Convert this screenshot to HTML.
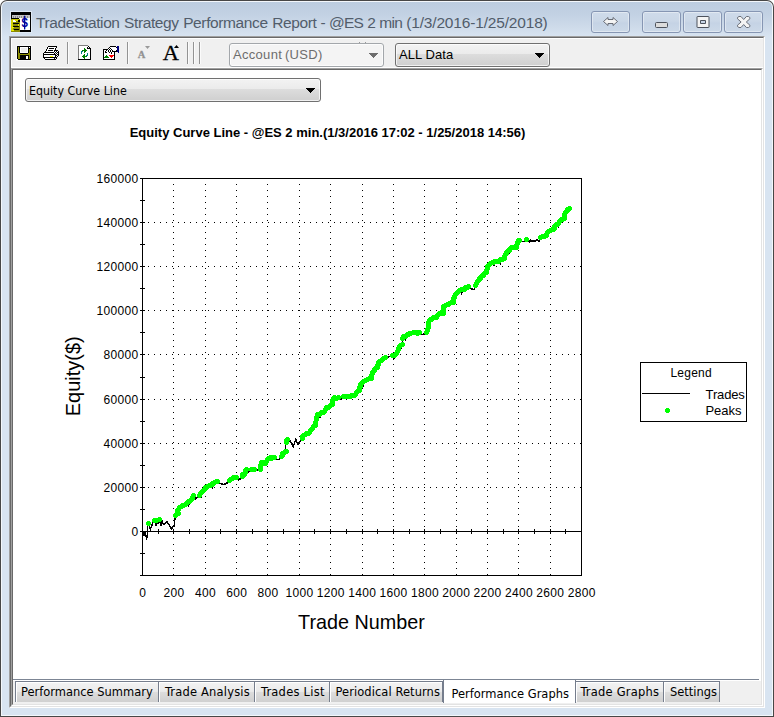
<!DOCTYPE html>
<html><head><meta charset="utf-8"><title>TradeStation Strategy Performance Report</title>
<style>
html,body{margin:0;padding:0;}
body{width:774px;height:717px;overflow:hidden;background:#fff;font-family:"Liberation Sans",sans-serif;position:relative;}
.abs{position:absolute;}
div{box-sizing:border-box;}
#f0{position:absolute;left:0;top:0;width:774px;height:717px;background:#474747;border-radius:7px 7px 0 0;}
#f1{position:absolute;left:1px;top:1px;width:772px;height:715px;background:#f3f7fb;border-radius:6px 6px 0 0;}
#f2{position:absolute;left:2px;top:2px;width:770px;height:713px;border-radius:5px 5px 0 0;background:linear-gradient(#bccde0 0px,#c2d1e3 12px,#cddae9 24px,#d8e4f1 35px,#d8e4f1 100%);}
#title{position:absolute;left:36px;top:12.6px;font-size:15.5px;line-height:20px;letter-spacing:-.38px;word-spacing:.5px;color:#525d6b;white-space:nowrap;}
.cb{position:absolute;top:11px;width:39px;height:22px;border:1px solid #8696b3;border-radius:3px;background:linear-gradient(#cfdbea 0,#cad7e7 45%,#c5d3e5 55%,#ccd9e8 100%);box-shadow:inset 0 0 0 1px rgba(255,255,255,.4);}
#client{position:absolute;left:9px;top:36px;width:756px;height:672px;background:#f0f0f0;border-left:1px solid #a0a0a0;border-top:1px solid #a0a0a0;border-right:1px solid #fff;border-bottom:1px solid #fff;}
#client2{position:absolute;left:10px;top:37px;width:754px;height:670px;background:#f0f0f0;border-left:1px solid #696969;border-top:1px solid #696969;border-right:1px solid #e3e3e3;border-bottom:1px solid #e3e3e3;}
#tbhl{position:absolute;left:11px;top:38px;width:752px;height:30px;border-left:1px solid #fff;border-top:1px solid #fff;border-bottom:1px solid #fff;}
.sep{position:absolute;top:42px;width:2px;height:22px;border-left:1px solid #939393;border-right:1px solid #fbfbfb;}
.combo{position:absolute;border:1px solid #707070;border-radius:3px;background:linear-gradient(#f3f3f3 0,#ebebeb 45%,#dddddd 46%,#cfcfcf 100%);box-shadow:inset 0 0 0 1px rgba(255,255,255,.7);font-size:13px;white-space:nowrap;}
.combo span{position:absolute;left:4px;top:3px;line-height:16px;}
.arrow{position:absolute;width:0;height:0;border-left:4.5px solid transparent;border-right:4.5px solid transparent;border-top:5px solid #000;}
#cont-o{position:absolute;left:11px;top:68px;width:752px;height:638px;background:#fff;border-left:1px solid #a0a0a0;border-top:1px solid #a0a0a0;border-right:1px solid #fff;border-bottom:1px solid #fff;}
#cont-i{position:absolute;left:12px;top:69px;width:750px;height:636px;background:#fff;border-left:1px solid #696969;border-top:1px solid #696969;border-right:1px solid #e3e3e3;border-bottom:1px solid #e3e3e3;}
#tabstrip{position:absolute;left:13px;top:680px;width:748px;height:24px;background:#f0f0f0;border-top:1px solid #fff;}
.tf{font-family:"DejaVu Sans Condensed","Liberation Sans",sans-serif;}
.tab{position:absolute;top:681px;height:21px;border-right:1px solid #757d8c;border-top:1px solid #757d8c;background:linear-gradient(#f3f3f3 0,#ebebeb 47%,#dddddd 50%,#d0d0d0 100%);box-shadow:inset 1px 1px 0 0 #fff;font-size:12.75px;line-height:20px;text-align:left;white-space:nowrap;color:#000;}
.tab span{position:absolute;top:0;}
.tab.first{border-left:1px solid #757d8c;}
.tab.sel{top:680px;height:23px;background:#fff;border:1px solid #757d8c;border-top:none;border-bottom:none;box-shadow:none;}
</style></head><body>
<div id="f0"></div><div id="f1"></div><div id="f2"></div>
<!--APPICON-->
<div id="title">TradeStation Strategy Performance Report<span style="letter-spacing:-.72px"> - @ES 2 min </span><span style="letter-spacing:-.17px">(1/3/2016-1/25/2018)</span></div>
<div class="cb" style="left:591px"></div>
<div class="cb" style="left:642px"></div>
<div class="cb" style="left:683px"></div>
<div class="cb" style="left:724px"></div>
<svg class="abs" style="left:0;top:0" width="774" height="40" viewBox="0 0 774 40">
<g fill="#f4f4f4" stroke="#4d525c" stroke-width="1" stroke-linejoin="round">
<path d="M603.5 21.5 L608 17.5 V19.5 H613 V17.5 L617.5 21.5 L613 25.5 V23.5 H608 V25.5 Z" stroke="#5a5f69" stroke-width=".9"/>
<rect x="655.5" y="22.5" width="12" height="5" rx="1" fill="#dcdcdc"/>
<path fill-rule="evenodd" d="M697.5 16.500h11a.5 .5 0 0 1 .5 .5v10a.5 .5 0 0 1 -.5 .5h-11a.5 .5 0 0 1 -.5 -.5v-10a.5 .5 0 0 1 .5 -.5z M700.5 20.500v3h5v-3z"/>
<path d="M737.500 17.500 l1.500 -1 h2 l2.700 3 l2.700 -3 h2 l1.500 1 v1.300 l-3.600 3.200 l3.600 3.200 v1.300 l-1.500 1 h-2 l-2.700 -3 l-2.700 3 h-2 l-1.500 -1 v-1.300 l3.600 -3.200 l-3.600 -3.200 z" stroke="#6a6f79"/>
</g>
</svg>

<div id="client"></div><div id="client2"></div><div id="tbhl"></div>
<div class="sep" style="left:67px"></div>
<div class="sep" style="left:127px"></div>
<div class="sep" style="left:187px"></div><div class="sep" style="left:193px"></div><div class="sep" style="left:199px"></div>
<svg class="abs" style="left:0;top:0" width="774" height="72" viewBox="0 0 774 72">
<!-- app icon -->
<rect x="10" y="11" width="22" height="22" fill="#e4edf7" opacity=".8"/>
<g shape-rendering="crispEdges">
<rect x="11" y="12" width="20" height="20" fill="#000"/>
<rect x="12" y="15" width="18" height="3" fill="#c4c4c4"/>
<path d="M13 16v2M15 16v2M17 16v2M19 16v2M21 16v2M23 16v2M25 16v2M27 16v2" stroke="#8c8c8c" stroke-width="1" transform="translate(.5,0)"/>
<rect x="19" y="18" width="11" height="12" fill="#fff"/>
<rect x="11" y="19" width="9" height="13" rx="1" fill="#8c8c00"/>
<rect x="11" y="20" width="2" height="11" fill="#d4d400"/>
<rect x="12" y="19" width="7" height="1" fill="#c8c800"/>
<rect x="13" y="20" width="3" height="2" fill="#fff"/>
<rect x="15" y="20" width="3" height="1" fill="#e6e600"/>
<rect x="18" y="20" width="2" height="2" fill="#000"/>
<rect x="13" y="23" width="6" height="1" fill="#000"/>
<rect x="13" y="26" width="6" height="1" fill="#000"/>
<rect x="14" y="29" width="5" height="1" fill="#000"/>
<rect x="12" y="27" width="2" height="1" fill="#f0f000"/>
<rect x="12" y="30" width="2" height="1" fill="#f0f000"/>
<rect x="18" y="24" width="1" height="2" fill="#e6e600"/>
</g>
<text transform="translate(24.6,27.3) scale(.85,1)" font-family="'Liberation Sans',sans-serif" font-weight="bold" font-size="13.5px" text-anchor="middle" fill="#00009c">$</text>
<path d="M24.6 15.8v13.6" stroke="#00009c" stroke-width="1.2"/>
<!-- save -->
<rect x="16" y="45" width="16" height="16" fill="#fff" opacity=".55"/>
<g shape-rendering="crispEdges">
<rect x="17" y="46" width="14" height="14" fill="#000"/>
<rect x="18" y="47" width="1" height="12" fill="#8c8c00"/>
<rect x="19" y="53" width="1" height="6" fill="#8c8c00"/>
<rect x="29" y="49" width="1" height="10" fill="#8c8c00"/>
<rect x="28" y="53" width="1" height="2" fill="#8c8c00"/>
<rect x="18" y="54" width="12" height="1" fill="#8c8c00"/>
<rect x="20" y="47" width="8" height="6" fill="#fff"/>
<rect x="21" y="48" width="6" height="4" fill="#ececec"/>
<rect x="20" y="55" width="8" height="4" fill="#000"/>
<rect x="26" y="56" width="2" height="3" fill="#fff"/>
<rect x="29" y="47" width="1" height="1" fill="#fff"/>
<rect x="17" y="59" width="1" height="1" fill="#fff"/>
</g>
<!-- printer -->
<g shape-rendering="crispEdges">
<path fill="#000" d="M48 46h9v1h-9zM47 47h1v1h-1zM56 47h1v1h-1zM47 48h1v1h-1zM49 48h5v1h-5zM55 48h1v1h-1zM46 49h1v1h-1zM55 49h1v1h-1zM46 50h1v1h-1zM48 50h5v1h-5zM54 50h4v1h-4zM45 51h1v1h-1zM54 51h1v1h-1zM56 51h1v1h-1zM58 51h1v1h-1zM44 52h10v1h-10zM55 52h1v1h-1zM57 52h2v1h-2zM43 53h1v1h-1zM54 53h1v1h-1zM56 53h1v1h-1zM58 53h1v1h-1zM43 54h13v1h-13zM57 54h2v1h-2zM43 55h1v1h-1zM55 55h2v1h-2zM58 55h1v1h-1zM43 56h1v1h-1zM55 56h1v1h-1zM57 56h1v1h-1zM43 57h14v1h-14zM44 58h1v1h-1zM54 58h1v1h-1zM56 58h1v1h-1zM45 59h11v1h-11z"/><path fill="#fff" d="M48 47h8v1h-8zM48 48h1v1h-1zM54 48h1v1h-1zM47 49h8v1h-8zM47 50h1v1h-1zM53 50h1v1h-1zM46 51h8v1h-8zM55 51h1v1h-1zM57 51h1v1h-1zM54 52h1v1h-1zM56 52h1v1h-1zM44 53h10v1h-10zM55 53h1v1h-1zM57 53h1v1h-1zM56 54h1v1h-1zM44 55h11v1h-11zM57 55h1v1h-1zM44 56h6v1h-6zM53 56h2v1h-2zM56 56h1v1h-1zM45 58h9v1h-9zM55 58h1v1h-1z"/><path fill="#ffff00" d="M50 56h3v1h-3z"/>
<!-- refresh -->
<path fill="#808080" d="M78 45h10v1h-10zM78 46h1v1h-1zM78 47h1v1h-1zM78 48h1v1h-1zM78 49h1v1h-1zM78 50h1v1h-1zM78 51h1v1h-1zM78 52h1v1h-1zM78 53h1v1h-1zM78 54h1v1h-1zM78 55h1v1h-1zM78 56h1v1h-1zM78 57h1v1h-1zM78 58h1v1h-1z"/><path fill="#fff" d="M79 46h9v1h-9zM79 47h8v1h-8zM88 47h1v1h-1zM79 48h5v1h-5zM85 48h2v1h-2zM79 49h5v1h-5zM86 49h4v1h-4zM79 50h3v1h-3zM87 50h3v1h-3zM79 51h2v1h-2zM83 51h1v1h-1zM86 51h4v1h-4zM79 52h2v1h-2zM82 52h2v1h-2zM85 52h5v1h-5zM79 53h2v1h-2zM82 53h5v1h-5zM88 53h2v1h-2zM79 54h5v1h-5zM85 54h2v1h-2zM88 54h2v1h-2zM79 55h4v1h-4zM85 55h1v1h-1zM88 55h2v1h-2zM79 56h3v1h-3zM87 56h3v1h-3zM79 57h4v1h-4zM85 57h5v1h-5zM79 58h5v1h-5zM85 58h5v1h-5z"/><path fill="#000" d="M88 46h1v1h-1zM87 47h1v1h-1zM89 47h1v1h-1zM87 48h4v1h-4zM90 49h1v1h-1zM90 50h1v1h-1zM90 51h1v1h-1zM90 52h1v1h-1zM90 53h1v1h-1zM90 54h1v1h-1zM90 55h1v1h-1zM90 56h1v1h-1zM90 57h1v1h-1zM90 58h1v1h-1zM78 59h13v1h-13z"/><path fill="#008000" d="M84 48h1v1h-1zM84 49h2v1h-2zM82 50h5v1h-5zM84 51h2v1h-2zM84 52h1v1h-1zM84 54h1v1h-1zM83 55h2v1h-2zM82 56h5v1h-5zM83 57h2v1h-2zM84 58h1v1h-1z"/><path fill="#008080" d="M81 51h2v1h-2zM81 52h1v1h-1zM81 53h1v1h-1zM87 53h1v1h-1zM87 54h1v1h-1zM86 55h2v1h-2z"/>
<!-- settings -->
<path fill="#000" d="M110 46h6v1h-6zM109 47h1v1h-1zM116 47h1v1h-1zM108 48h1v1h-1zM110 48h1v1h-1zM103 49h5v1h-5zM109 49h1v1h-1zM111 49h1v1h-1zM103 50h1v1h-1zM106 50h1v1h-1zM108 50h1v1h-1zM110 50h1v1h-1zM112 50h1v1h-1zM116 50h1v1h-1zM103 51h1v1h-1zM105 51h1v1h-1zM108 51h1v1h-1zM110 51h1v1h-1zM112 51h5v1h-5zM103 52h1v1h-1zM105 52h2v1h-2zM109 52h1v1h-1zM111 52h1v1h-1zM114 52h1v1h-1zM103 53h1v1h-1zM111 53h1v1h-1zM114 53h1v1h-1zM103 54h1v1h-1zM114 54h1v1h-1zM103 55h1v1h-1zM114 55h1v1h-1zM103 56h1v1h-1zM114 56h1v1h-1zM103 57h1v1h-1zM114 57h1v1h-1zM103 58h1v1h-1zM114 58h1v1h-1zM103 59h12v1h-12z"/><path fill="#000080" d="M117 46h2v1h-2zM117 47h2v1h-2zM117 48h2v1h-2zM117 49h2v1h-2zM117 50h2v1h-2zM117 51h2v1h-2zM118 52h1v1h-1z"/><path fill="#fff" d="M110 47h6v1h-6zM109 48h1v1h-1zM111 48h6v1h-6zM108 49h1v1h-1zM110 49h1v1h-1zM112 49h5v1h-5zM104 50h2v1h-2zM107 50h1v1h-1zM109 50h1v1h-1zM111 50h1v1h-1zM113 50h3v1h-3zM104 51h1v1h-1zM106 51h2v1h-2zM109 51h1v1h-1zM111 51h1v1h-1zM104 52h1v1h-1zM107 52h2v1h-2zM110 52h1v1h-1zM112 52h2v1h-2zM104 53h7v1h-7zM112 53h2v1h-2zM104 54h10v1h-10zM104 55h2v1h-2zM107 55h2v1h-2zM104 56h1v1h-1zM108 56h2v1h-2zM113 56h1v1h-1zM109 57h2v1h-2zM112 57h2v1h-2zM104 58h10v1h-10z"/><path fill="#008000" d="M106 55h1v1h-1zM105 56h3v1h-3zM104 57h5v1h-5z"/><path fill="#ff0000" d="M109 55h5v1h-5zM110 56h3v1h-3zM111 57h1v1h-1z"/>
</g>
<!-- small A -->
<text x="141.6" y="58" font-family="'Liberation Serif',serif" font-weight="bold" font-size="10.5px" text-anchor="middle" fill="#929292" stroke="#929292" stroke-width=".3">A</text>
<path d="M145 46h5l-2.500 3z" fill="#9a9a9a"/>
<!-- big A -->
<text transform="translate(170.9,60) scale(1.09,1)" font-family="'Liberation Serif',serif" font-size="20.5px" text-anchor="middle" fill="#000" stroke="#000" stroke-width=".3">A</text>
<path d="M174 48h5l-2.500 -3z" fill="#000"/>
</svg>

<div class="combo" style="left:229px;top:43px;width:155px;height:24px;color:#6d6d6d;border-color:#a3a7ab;background:#f4f4f4;box-shadow:inset 0 0 0 1px #fcfcfc"><span style="left:3px;top:3.4px;letter-spacing:.3px;word-spacing:-1px">Account (USD)</span><svg class="abs" style="left:139px;top:9px" width="9" height="5" viewBox="0 0 9 5" shape-rendering="crispEdges"><path fill="#6d6d6d" d="M0 0h9v1h-1v1h-1v1h-1v1h-1v1h-1v-1h-1v-1h-1v-1h-1v-1h-1z"/></svg></div>
<div class="combo" style="left:395px;top:43px;width:155px;height:24px;"><span style="left:3px;top:3.4px;letter-spacing:.08px">ALL Data</span><svg class="abs" style="left:139px;top:9px" width="9" height="5" viewBox="0 0 9 5" shape-rendering="crispEdges"><path fill="#000" d="M0 0h9v1h-1v1h-1v1h-1v1h-1v1h-1v-1h-1v-1h-1v-1h-1v-1h-1z"/></svg></div>
<div id="cont-o"></div><div id="cont-i"></div>
<div class="combo" style="left:25px;top:78px;width:296px;height:24px;"><span class="tf" style="font-size:12.3px;left:3px;top:4px">Equity Curve Line</span><svg class="abs" style="left:280px;top:9px" width="9" height="5" viewBox="0 0 9 5" shape-rendering="crispEdges"><path fill="#000" d="M0 0h9v1h-1v1h-1v1h-1v1h-1v1h-1v-1h-1v-1h-1v-1h-1v-1h-1z"/></svg></div>
<svg class="abs" style="left:0;top:0" width="774" height="717" viewBox="0 0 774 717" font-family="'Liberation Sans',sans-serif">
<g stroke="#000" stroke-width="1" stroke-dasharray="1 5" shape-rendering="crispEdges">
<line x1="173.5" y1="184" x2="173.5" y2="575"/>
<line x1="205.5" y1="184" x2="205.5" y2="575"/>
<line x1="236.5" y1="184" x2="236.5" y2="575"/>
<line x1="267.5" y1="184" x2="267.5" y2="575"/>
<line x1="299.5" y1="184" x2="299.5" y2="575"/>
<line x1="330.5" y1="184" x2="330.5" y2="575"/>
<line x1="362.5" y1="184" x2="362.5" y2="575"/>
<line x1="393.5" y1="184" x2="393.5" y2="575"/>
<line x1="424.5" y1="184" x2="424.5" y2="575"/>
<line x1="456.5" y1="184" x2="456.5" y2="575"/>
<line x1="487.5" y1="184" x2="487.5" y2="575"/>
<line x1="518.5" y1="184" x2="518.5" y2="575"/>
<line x1="550.5" y1="184" x2="550.5" y2="575"/>
<line x1="148" y1="222.5" x2="581" y2="222.5"/>
<line x1="148" y1="266.5" x2="581" y2="266.5"/>
<line x1="148" y1="310.5" x2="581" y2="310.5"/>
<line x1="148" y1="354.5" x2="581" y2="354.5"/>
<line x1="148" y1="399.5" x2="581" y2="399.5"/>
<line x1="148" y1="443.5" x2="581" y2="443.5"/>
<line x1="148" y1="487.5" x2="581" y2="487.5"/>
</g>
<g stroke="#000" stroke-width="1" shape-rendering="crispEdges" fill="none">
<rect x="142.5" y="178.5" width="439.0" height="397.0"/>
<line x1="142.5" y1="531.5" x2="581.5" y2="531.5"/>
<line x1="140" y1="178.5" x2="145" y2="178.5"/>
<line x1="140" y1="200.5" x2="145" y2="200.5"/>
<line x1="140" y1="222.5" x2="145" y2="222.5"/>
<line x1="140" y1="244.5" x2="145" y2="244.5"/>
<line x1="140" y1="266.5" x2="145" y2="266.5"/>
<line x1="140" y1="288.5" x2="145" y2="288.5"/>
<line x1="140" y1="310.5" x2="145" y2="310.5"/>
<line x1="140" y1="332.5" x2="145" y2="332.5"/>
<line x1="140" y1="354.5" x2="145" y2="354.5"/>
<line x1="140" y1="377.5" x2="145" y2="377.5"/>
<line x1="140" y1="399.5" x2="145" y2="399.5"/>
<line x1="140" y1="421.5" x2="145" y2="421.5"/>
<line x1="140" y1="443.5" x2="145" y2="443.5"/>
<line x1="140" y1="465.5" x2="145" y2="465.5"/>
<line x1="140" y1="487.5" x2="145" y2="487.5"/>
<line x1="140" y1="509.5" x2="145" y2="509.5"/>
<line x1="140" y1="531.5" x2="145" y2="531.5"/>
<line x1="140" y1="553.5" x2="145" y2="553.5"/>
<line x1="140" y1="575.5" x2="145" y2="575.5"/>
<line x1="158.5" y1="529" x2="158.5" y2="534"/>
<line x1="173.5" y1="529" x2="173.5" y2="534"/>
<line x1="189.5" y1="529" x2="189.5" y2="534"/>
<line x1="205.5" y1="529" x2="205.5" y2="534"/>
<line x1="220.5" y1="529" x2="220.5" y2="534"/>
<line x1="236.5" y1="529" x2="236.5" y2="534"/>
<line x1="252.5" y1="529" x2="252.5" y2="534"/>
<line x1="267.5" y1="529" x2="267.5" y2="534"/>
<line x1="283.5" y1="529" x2="283.5" y2="534"/>
<line x1="299.5" y1="529" x2="299.5" y2="534"/>
<line x1="314.5" y1="529" x2="314.5" y2="534"/>
<line x1="330.5" y1="529" x2="330.5" y2="534"/>
<line x1="346.5" y1="529" x2="346.5" y2="534"/>
<line x1="362.5" y1="529" x2="362.5" y2="534"/>
<line x1="377.5" y1="529" x2="377.5" y2="534"/>
<line x1="393.5" y1="529" x2="393.5" y2="534"/>
<line x1="409.5" y1="529" x2="409.5" y2="534"/>
<line x1="424.5" y1="529" x2="424.5" y2="534"/>
<line x1="440.5" y1="529" x2="440.5" y2="534"/>
<line x1="456.5" y1="529" x2="456.5" y2="534"/>
<line x1="471.5" y1="529" x2="471.5" y2="534"/>
<line x1="487.5" y1="529" x2="487.5" y2="534"/>
<line x1="503.5" y1="529" x2="503.5" y2="534"/>
<line x1="518.5" y1="529" x2="518.5" y2="534"/>
<line x1="534.5" y1="529" x2="534.5" y2="534"/>
<line x1="550.5" y1="529" x2="550.5" y2="534"/>
<line x1="565.5" y1="529" x2="565.5" y2="534"/>
</g>
<g font-size="12px" fill="#000" letter-spacing=".33">
<text x="138.6" y="183.0" text-anchor="end">160000</text>
<text x="138.6" y="227.0" text-anchor="end">140000</text>
<text x="138.6" y="271.0" text-anchor="end">120000</text>
<text x="138.6" y="315.0" text-anchor="end">100000</text>
<text x="138.6" y="359.0" text-anchor="end">80000</text>
<text x="138.6" y="404.0" text-anchor="end">60000</text>
<text x="138.6" y="448.0" text-anchor="end">40000</text>
<text x="138.6" y="492.0" text-anchor="end">20000</text>
<text x="138.6" y="536.0" text-anchor="end">0</text>
<text x="142.7" y="597" text-anchor="middle">0</text>
<text x="174.1" y="597" text-anchor="middle">200</text>
<text x="205.4" y="597" text-anchor="middle">400</text>
<text x="236.8" y="597" text-anchor="middle">600</text>
<text x="268.1" y="597" text-anchor="middle">800</text>
<text x="299.5" y="597" text-anchor="middle">1000</text>
<text x="330.8" y="597" text-anchor="middle">1200</text>
<text x="362.2" y="597" text-anchor="middle">1400</text>
<text x="393.6" y="597" text-anchor="middle">1600</text>
<text x="424.9" y="597" text-anchor="middle">1800</text>
<text x="456.3" y="597" text-anchor="middle">2000</text>
<text x="487.6" y="597" text-anchor="middle">2200</text>
<text x="519.0" y="597" text-anchor="middle">2400</text>
<text x="550.3" y="597" text-anchor="middle">2600</text>
<text x="581.7" y="597" text-anchor="middle">2800</text>
</g>
<text x="327.5" y="137" font-size="13px" font-weight="bold" text-anchor="middle" fill="#000">Equity Curve Line - @ES 2 min.(1/3/2016 17:02 - 1/25/2018 14:56)</text>
<text x="361.5" y="628.5" font-size="19.8px" text-anchor="middle" fill="#000">Trade Number</text>
<text transform="translate(80,376.3) rotate(-90)" font-size="20px" text-anchor="middle" fill="#000">Equity($)</text>
<polyline points="143.5,531.5 145.5,534.5 146.5,538.2 147.3,536.0 147.3,526.3 148.6,523.6 149.5,526.8 150.3,529.3 151.4,526.3 152.8,523.0 154.4,520.6 155.5,524.1 156.3,526.3 156.8,520.3 157.9,523.0 158.5,521.0 159.5,519.3 160.9,525.5 162.2,519.8 162.5,522.5 163.9,524.1 165.5,522.8 167.4,521.7 167.7,523.6 169.3,525.2 171.7,529.0 172.6,526.3 174.4,526.0 174.6,520.3 175.0,518.7 175.7,515.7 178.0,513.0 177.4,511.8 178.0,514.1 178.8,512.0 178.0,509.0 178.9,508.8 179.5,511.1 180.3,509.0 181.0,506.7 186.5,503.6 188.2,502.6 188.8,504.9 189.6,502.8 191.0,499.7 191.6,498.8 192.2,501.1 193.0,499.0 193.5,495.8 195.8,499.0 198.0,497.0 199.7,495.0 200.6,494.3 201.2,496.6 202.0,494.5 203.6,490.4 206.7,487.3 210.5,485.0 212.2,484.7 212.8,487.0 213.6,484.9 216.0,481.9 217.5,481.5 219.8,483.4 223.7,484.5 226.8,483.4 229.0,480.3 234.6,477.7 236.0,477.2 238.4,480.0 241.0,478.5 242.3,476.4 245.4,472.6 246.6,469.8 248.7,472.0 251.0,469.5 254.5,469.5 256.8,470.6 260.0,469.0 261.7,462.0 265.6,463.0 266.9,461.1 267.5,463.4 268.3,461.3 268.7,458.3 274.9,457.2 277.2,459.8 279.5,459.3 281.9,456.7 282.6,453.6 283.5,453.7 284.1,456.0 284.9,453.9 286.5,451.3 285.4,448.0 285.4,444.0 286.5,442.8 287.0,439.7 290.4,441.2 293.2,446.4 295.8,439.7 298.0,444.3 300.5,441.2 302.5,438.1 303.6,435.0 309.0,432.0 310.4,430.9 311.0,433.2 311.8,431.1 312.9,428.0 315.5,425.0 316.0,418.8 317.5,414.9 319.5,414.5 320.1,416.8 320.9,414.7 324.5,411.0 325.2,410.3 325.8,412.6 326.6,410.5 326.8,407.9 332.2,404.8 333.0,398.6 338.4,397.4 340.8,399.4 343.9,396.8 348.5,396.8 354.0,395.4 359.4,390.8 360.2,384.6 362.4,383.6 363.0,385.9 363.8,383.8 365.6,380.7 371.0,378.4 372.6,372.2 377.2,367.5 378.8,362.1 385.0,357.4 388.0,357.2 392.0,355.9 393.2,356.1 393.8,358.4 394.6,356.3 395.8,354.3 398.9,348.1 399.8,347.2 400.4,349.5 401.2,347.4 402.0,344.3 402.4,341.0 402.8,338.0 405.2,336.9 405.8,339.2 406.6,337.1 408.2,334.2 414.4,332.6 419.0,332.6 423.0,334.6 426.0,332.6 428.4,327.2 430.0,319.5 436.0,317.1 438.4,314.5 443.0,313.3 443.9,306.3 448.5,304.0 453.4,302.5 454.0,296.2 458.4,291.0 461.1,290.9 461.7,293.2 462.5,291.1 464.2,289.0 468.7,286.2 471.0,288.8 473.9,289.5 475.9,285.3 478.8,280.4 482.6,275.6 486.5,272.7 487.5,266.9 490.4,263.0 493.5,263.0 494.1,265.3 494.9,263.2 498.0,261.0 499.7,260.8 500.3,263.1 501.1,261.0 504.0,258.0 505.1,255.7 505.7,258.0 506.5,255.9 506.9,252.3 508.3,251.3 508.9,253.6 509.7,251.5 511.7,247.5 516.6,247.5 517.5,242.6 517.9,242.3 518.5,244.6 519.3,242.5 519.5,240.0 523.3,241.7 526.2,239.3 528.5,240.8 529.5,241.8 530.5,240.4 531.5,241.5 533.0,240.6 534.5,241.2 536.9,240.0 538.0,240.4 539.2,241.3 540.8,237.8 546.6,235.9 548.5,231.0 553.4,229.0 557.2,224.2 557.9,223.3 558.5,225.6 559.3,223.5 560.0,220.3 564.0,218.4 565.0,212.6 569.5,208.7" fill="none" stroke="#000" stroke-width="1.5" shape-rendering="crispEdges"/>
<rect x="143" y="532" width="3" height="4" fill="#000"/>
<path d="M147 521h3v1h1v3h-1v1h-3v-1h-1v-3h1zM153 518h3v1h1v3h-1v1h-3v-1h-1v-3h1zM155 518h3v1h1v3h-1v1h-3v-1h-1v-3h1zM158 517h3v1h1v3h-1v1h-3v-1h-1v-3h1zM174 513h3v1h1v3h-1v1h-3v-1h-1v-3h1zM175 512h3v1h1v3h-1v1h-3v-1h-1v-3h1zM177 511h3v1h1v3h-1v1h-3v-1h-1v-3h1zM176 508h3v1h1v3h-1v1h-3v-1h-1v-3h1zM177 507h3v1h1v3h-1v1h-3v-1h-1v-3h1zM178 505h3v1h1v3h-1v1h-3v-1h-1v-3h1zM180 504h3v1h1v3h-1v1h-3v-1h-1v-3h1zM181 503h3v1h1v3h-1v1h-3v-1h-1v-3h1zM182 503h3v1h1v3h-1v1h-3v-1h-1v-3h1zM184 502h3v1h1v3h-1v1h-3v-1h-1v-3h1zM185 501h3v1h1v3h-1v1h-3v-1h-1v-3h1zM186 500h3v1h1v3h-1v1h-3v-1h-1v-3h1zM187 499h3v1h1v3h-1v1h-3v-1h-1v-3h1zM188 499h3v1h1v3h-1v1h-3v-1h-1v-3h1zM190 497h3v1h1v3h-1v1h-3v-1h-1v-3h1zM191 496h3v1h1v3h-1v1h-3v-1h-1v-3h1zM191 495h3v1h1v3h-1v1h-3v-1h-1v-3h1zM192 493h3v1h1v3h-1v1h-3v-1h-1v-3h1zM198 493h3v1h1v3h-1v1h-3v-1h-1v-3h1zM199 491h3v1h1v3h-1v1h-3v-1h-1v-3h1zM200 490h3v1h1v3h-1v1h-3v-1h-1v-3h1zM201 489h3v1h1v3h-1v1h-3v-1h-1v-3h1zM202 488h3v1h1v3h-1v1h-3v-1h-1v-3h1zM203 487h3v1h1v3h-1v1h-3v-1h-1v-3h1zM204 485h3v1h1v3h-1v1h-3v-1h-1v-3h1zM205 485h3v1h1v3h-1v1h-3v-1h-1v-3h1zM206 484h3v1h1v3h-1v1h-3v-1h-1v-3h1zM208 483h3v1h1v3h-1v1h-3v-1h-1v-3h1zM209 483h3v1h1v3h-1v1h-3v-1h-1v-3h1zM211 482h3v1h1v3h-1v1h-3v-1h-1v-3h1zM211 481h3v1h1v3h-1v1h-3v-1h-1v-3h1zM213 480h3v1h1v3h-1v1h-3v-1h-1v-3h1zM215 479h3v1h1v3h-1v1h-3v-1h-1v-3h1zM216 479h3v1h1v3h-1v1h-3v-1h-1v-3h1zM228 478h3v1h1v3h-1v1h-3v-1h-1v-3h1zM229 477h3v1h1v3h-1v1h-3v-1h-1v-3h1zM231 476h3v1h1v3h-1v1h-3v-1h-1v-3h1zM232 475h3v1h1v3h-1v1h-3v-1h-1v-3h1zM233 475h3v1h1v3h-1v1h-3v-1h-1v-3h1zM235 475h3v1h1v3h-1v1h-3v-1h-1v-3h1zM241 474h3v1h1v3h-1v1h-3v-1h-1v-3h1zM241 472h3v1h1v3h-1v1h-3v-1h-1v-3h1zM243 472h3v1h1v3h-1v1h-3v-1h-1v-3h1zM244 470h3v1h1v3h-1v1h-3v-1h-1v-3h1zM244 468h3v1h1v3h-1v1h-3v-1h-1v-3h1zM245 467h3v1h1v3h-1v1h-3v-1h-1v-3h1zM250 467h3v1h1v3h-1v1h-3v-1h-1v-3h1zM252 467h3v1h1v3h-1v1h-3v-1h-1v-3h1zM253 467h3v1h1v3h-1v1h-3v-1h-1v-3h1zM259 467h3v1h1v3h-1v1h-3v-1h-1v-3h1zM259 465h3v1h1v3h-1v1h-3v-1h-1v-3h1zM259 463h3v1h1v3h-1v1h-3v-1h-1v-3h1zM260 462h3v1h1v3h-1v1h-3v-1h-1v-3h1zM260 460h3v1h1v3h-1v1h-3v-1h-1v-3h1zM262 460h3v1h1v3h-1v1h-3v-1h-1v-3h1zM264 461h3v1h1v3h-1v1h-3v-1h-1v-3h1zM265 459h3v1h1v3h-1v1h-3v-1h-1v-3h1zM266 457h3v1h1v3h-1v1h-3v-1h-1v-3h1zM267 456h3v1h1v3h-1v1h-3v-1h-1v-3h1zM269 455h3v1h1v3h-1v1h-3v-1h-1v-3h1zM270 456h3v1h1v3h-1v1h-3v-1h-1v-3h1zM272 455h3v1h1v3h-1v1h-3v-1h-1v-3h1zM273 455h3v1h1v3h-1v1h-3v-1h-1v-3h1zM280 454h3v1h1v3h-1v1h-3v-1h-1v-3h1zM281 453h3v1h1v3h-1v1h-3v-1h-1v-3h1zM281 451h3v1h1v3h-1v1h-3v-1h-1v-3h1zM283 450h3v1h1v3h-1v1h-3v-1h-1v-3h1zM284 449h3v1h1v3h-1v1h-3v-1h-1v-3h1zM285 449h3v1h1v3h-1v1h-3v-1h-1v-3h1zM285 440h3v1h1v3h-1v1h-3v-1h-1v-3h1zM285 438h3v1h1v3h-1v1h-3v-1h-1v-3h1zM286 437h3v1h1v3h-1v1h-3v-1h-1v-3h1zM301 436h3v1h1v3h-1v1h-3v-1h-1v-3h1zM301 434h3v1h1v3h-1v1h-3v-1h-1v-3h1zM302 433h3v1h1v3h-1v1h-3v-1h-1v-3h1zM304 432h3v1h1v3h-1v1h-3v-1h-1v-3h1zM305 431h3v1h1v3h-1v1h-3v-1h-1v-3h1zM307 431h3v1h1v3h-1v1h-3v-1h-1v-3h1zM308 430h3v1h1v3h-1v1h-3v-1h-1v-3h1zM309 428h3v1h1v3h-1v1h-3v-1h-1v-3h1zM310 427h3v1h1v3h-1v1h-3v-1h-1v-3h1zM311 426h3v1h1v3h-1v1h-3v-1h-1v-3h1zM312 424h3v1h1v3h-1v1h-3v-1h-1v-3h1zM314 423h3v1h1v3h-1v1h-3v-1h-1v-3h1zM314 421h3v1h1v3h-1v1h-3v-1h-1v-3h1zM314 420h3v1h1v3h-1v1h-3v-1h-1v-3h1zM315 417h3v1h1v3h-1v1h-3v-1h-1v-3h1zM315 416h3v1h1v3h-1v1h-3v-1h-1v-3h1zM315 415h3v1h1v3h-1v1h-3v-1h-1v-3h1zM316 412h3v1h1v3h-1v1h-3v-1h-1v-3h1zM318 412h3v1h1v3h-1v1h-3v-1h-1v-3h1zM319 411h3v1h1v3h-1v1h-3v-1h-1v-3h1zM320 410h3v1h1v3h-1v1h-3v-1h-1v-3h1zM322 410h3v1h1v3h-1v1h-3v-1h-1v-3h1zM323 409h3v1h1v3h-1v1h-3v-1h-1v-3h1zM324 407h3v1h1v3h-1v1h-3v-1h-1v-3h1zM325 405h3v1h1v3h-1v1h-3v-1h-1v-3h1zM327 405h3v1h1v3h-1v1h-3v-1h-1v-3h1zM328 404h3v1h1v3h-1v1h-3v-1h-1v-3h1zM329 403h3v1h1v3h-1v1h-3v-1h-1v-3h1zM331 402h3v1h1v3h-1v1h-3v-1h-1v-3h1zM331 400h3v1h1v3h-1v1h-3v-1h-1v-3h1zM331 398h3v1h1v3h-1v1h-3v-1h-1v-3h1zM332 396h3v1h1v3h-1v1h-3v-1h-1v-3h1zM333 395h3v1h1v3h-1v1h-3v-1h-1v-3h1zM335 396h3v1h1v3h-1v1h-3v-1h-1v-3h1zM337 395h3v1h1v3h-1v1h-3v-1h-1v-3h1zM342 394h3v1h1v3h-1v1h-3v-1h-1v-3h1zM344 394h3v1h1v3h-1v1h-3v-1h-1v-3h1zM346 394h3v1h1v3h-1v1h-3v-1h-1v-3h1zM347 394h3v1h1v3h-1v1h-3v-1h-1v-3h1zM349 394h3v1h1v3h-1v1h-3v-1h-1v-3h1zM350 393h3v1h1v3h-1v1h-3v-1h-1v-3h1zM353 393h3v1h1v3h-1v1h-3v-1h-1v-3h1zM354 392h3v1h1v3h-1v1h-3v-1h-1v-3h1zM355 390h3v1h1v3h-1v1h-3v-1h-1v-3h1zM356 389h3v1h1v3h-1v1h-3v-1h-1v-3h1zM358 388h3v1h1v3h-1v1h-3v-1h-1v-3h1zM358 387h3v1h1v3h-1v1h-3v-1h-1v-3h1zM358 385h3v1h1v3h-1v1h-3v-1h-1v-3h1zM359 384h3v1h1v3h-1v1h-3v-1h-1v-3h1zM359 382h3v1h1v3h-1v1h-3v-1h-1v-3h1zM360 381h3v1h1v3h-1v1h-3v-1h-1v-3h1zM361 380h3v1h1v3h-1v1h-3v-1h-1v-3h1zM362 379h3v1h1v3h-1v1h-3v-1h-1v-3h1zM364 378h3v1h1v3h-1v1h-3v-1h-1v-3h1zM366 377h3v1h1v3h-1v1h-3v-1h-1v-3h1zM368 376h3v1h1v3h-1v1h-3v-1h-1v-3h1zM370 376h3v1h1v3h-1v1h-3v-1h-1v-3h1zM370 375h3v1h1v3h-1v1h-3v-1h-1v-3h1zM370 373h3v1h1v3h-1v1h-3v-1h-1v-3h1zM371 371h3v1h1v3h-1v1h-3v-1h-1v-3h1zM371 370h3v1h1v3h-1v1h-3v-1h-1v-3h1zM373 368h3v1h1v3h-1v1h-3v-1h-1v-3h1zM373 367h3v1h1v3h-1v1h-3v-1h-1v-3h1zM374 366h3v1h1v3h-1v1h-3v-1h-1v-3h1zM376 365h3v1h1v3h-1v1h-3v-1h-1v-3h1zM376 363h3v1h1v3h-1v1h-3v-1h-1v-3h1zM377 362h3v1h1v3h-1v1h-3v-1h-1v-3h1zM377 360h3v1h1v3h-1v1h-3v-1h-1v-3h1zM378 359h3v1h1v3h-1v1h-3v-1h-1v-3h1zM380 358h3v1h1v3h-1v1h-3v-1h-1v-3h1zM381 357h3v1h1v3h-1v1h-3v-1h-1v-3h1zM382 356h3v1h1v3h-1v1h-3v-1h-1v-3h1zM384 355h3v1h1v3h-1v1h-3v-1h-1v-3h1zM391 353h3v1h1v3h-1v1h-3v-1h-1v-3h1zM393 353h3v1h1v3h-1v1h-3v-1h-1v-3h1zM394 352h3v1h1v3h-1v1h-3v-1h-1v-3h1zM395 351h3v1h1v3h-1v1h-3v-1h-1v-3h1zM396 349h3v1h1v3h-1v1h-3v-1h-1v-3h1zM397 347h3v1h1v3h-1v1h-3v-1h-1v-3h1zM397 346h3v1h1v3h-1v1h-3v-1h-1v-3h1zM398 344h3v1h1v3h-1v1h-3v-1h-1v-3h1zM399 343h3v1h1v3h-1v1h-3v-1h-1v-3h1zM401 342h3v1h1v3h-1v1h-3v-1h-1v-3h1zM401 336h3v1h1v3h-1v1h-3v-1h-1v-3h1zM402 334h3v1h1v3h-1v1h-3v-1h-1v-3h1zM404 334h3v1h1v3h-1v1h-3v-1h-1v-3h1zM406 332h3v1h1v3h-1v1h-3v-1h-1v-3h1zM407 332h3v1h1v3h-1v1h-3v-1h-1v-3h1zM408 331h3v1h1v3h-1v1h-3v-1h-1v-3h1zM409 331h3v1h1v3h-1v1h-3v-1h-1v-3h1zM412 330h3v1h1v3h-1v1h-3v-1h-1v-3h1zM413 330h3v1h1v3h-1v1h-3v-1h-1v-3h1zM415 330h3v1h1v3h-1v1h-3v-1h-1v-3h1zM416 331h3v1h1v3h-1v1h-3v-1h-1v-3h1zM418 330h3v1h1v3h-1v1h-3v-1h-1v-3h1zM425 330h3v1h1v3h-1v1h-3v-1h-1v-3h1zM426 328h3v1h1v3h-1v1h-3v-1h-1v-3h1zM426 327h3v1h1v3h-1v1h-3v-1h-1v-3h1zM427 325h3v1h1v3h-1v1h-3v-1h-1v-3h1zM427 323h3v1h1v3h-1v1h-3v-1h-1v-3h1zM427 322h3v1h1v3h-1v1h-3v-1h-1v-3h1zM427 320h3v1h1v3h-1v1h-3v-1h-1v-3h1zM428 318h3v1h1v3h-1v1h-3v-1h-1v-3h1zM429 317h3v1h1v3h-1v1h-3v-1h-1v-3h1zM430 317h3v1h1v3h-1v1h-3v-1h-1v-3h1zM432 315h3v1h1v3h-1v1h-3v-1h-1v-3h1zM433 315h3v1h1v3h-1v1h-3v-1h-1v-3h1zM435 315h3v1h1v3h-1v1h-3v-1h-1v-3h1zM436 313h3v1h1v3h-1v1h-3v-1h-1v-3h1zM437 312h3v1h1v3h-1v1h-3v-1h-1v-3h1zM438 311h3v1h1v3h-1v1h-3v-1h-1v-3h1zM440 311h3v1h1v3h-1v1h-3v-1h-1v-3h1zM442 311h3v1h1v3h-1v1h-3v-1h-1v-3h1zM441 309h3v1h1v3h-1v1h-3v-1h-1v-3h1zM442 308h3v1h1v3h-1v1h-3v-1h-1v-3h1zM442 305h3v1h1v3h-1v1h-3v-1h-1v-3h1zM442 304h3v1h1v3h-1v1h-3v-1h-1v-3h1zM444 303h3v1h1v3h-1v1h-3v-1h-1v-3h1zM446 302h3v1h1v3h-1v1h-3v-1h-1v-3h1zM447 302h3v1h1v3h-1v1h-3v-1h-1v-3h1zM448 301h3v1h1v3h-1v1h-3v-1h-1v-3h1zM450 300h3v1h1v3h-1v1h-3v-1h-1v-3h1zM452 300h3v1h1v3h-1v1h-3v-1h-1v-3h1zM452 299h3v1h1v3h-1v1h-3v-1h-1v-3h1zM452 296h3v1h1v3h-1v1h-3v-1h-1v-3h1zM453 295h3v1h1v3h-1v1h-3v-1h-1v-3h1zM453 294h3v1h1v3h-1v1h-3v-1h-1v-3h1zM454 292h3v1h1v3h-1v1h-3v-1h-1v-3h1zM455 291h3v1h1v3h-1v1h-3v-1h-1v-3h1zM456 290h3v1h1v3h-1v1h-3v-1h-1v-3h1zM457 289h3v1h1v3h-1v1h-3v-1h-1v-3h1zM458 288h3v1h1v3h-1v1h-3v-1h-1v-3h1zM460 287h3v1h1v3h-1v1h-3v-1h-1v-3h1zM461 287h3v1h1v3h-1v1h-3v-1h-1v-3h1zM463 287h3v1h1v3h-1v1h-3v-1h-1v-3h1zM464 285h3v1h1v3h-1v1h-3v-1h-1v-3h1zM466 285h3v1h1v3h-1v1h-3v-1h-1v-3h1zM467 284h3v1h1v3h-1v1h-3v-1h-1v-3h1zM474 283h3v1h1v3h-1v1h-3v-1h-1v-3h1zM475 281h3v1h1v3h-1v1h-3v-1h-1v-3h1zM476 279h3v1h1v3h-1v1h-3v-1h-1v-3h1zM477 278h3v1h1v3h-1v1h-3v-1h-1v-3h1zM478 276h3v1h1v3h-1v1h-3v-1h-1v-3h1zM479 276h3v1h1v3h-1v1h-3v-1h-1v-3h1zM480 274h3v1h1v3h-1v1h-3v-1h-1v-3h1zM481 273h3v1h1v3h-1v1h-3v-1h-1v-3h1zM482 273h3v1h1v3h-1v1h-3v-1h-1v-3h1zM483 271h3v1h1v3h-1v1h-3v-1h-1v-3h1zM485 270h3v1h1v3h-1v1h-3v-1h-1v-3h1zM485 268h3v1h1v3h-1v1h-3v-1h-1v-3h1zM486 266h3v1h1v3h-1v1h-3v-1h-1v-3h1zM486 264h3v1h1v3h-1v1h-3v-1h-1v-3h1zM487 263h3v1h1v3h-1v1h-3v-1h-1v-3h1zM488 262h3v1h1v3h-1v1h-3v-1h-1v-3h1zM489 261h3v1h1v3h-1v1h-3v-1h-1v-3h1zM491 260h3v1h1v3h-1v1h-3v-1h-1v-3h1zM492 260h3v1h1v3h-1v1h-3v-1h-1v-3h1zM493 259h3v1h1v3h-1v1h-3v-1h-1v-3h1zM495 259h3v1h1v3h-1v1h-3v-1h-1v-3h1zM497 259h3v1h1v3h-1v1h-3v-1h-1v-3h1zM498 258h3v1h1v3h-1v1h-3v-1h-1v-3h1zM499 257h3v1h1v3h-1v1h-3v-1h-1v-3h1zM501 257h3v1h1v3h-1v1h-3v-1h-1v-3h1zM503 256h3v1h1v3h-1v1h-3v-1h-1v-3h1zM503 254h3v1h1v3h-1v1h-3v-1h-1v-3h1zM504 252h3v1h1v3h-1v1h-3v-1h-1v-3h1zM505 251h3v1h1v3h-1v1h-3v-1h-1v-3h1zM505 250h3v1h1v3h-1v1h-3v-1h-1v-3h1zM507 248h3v1h1v3h-1v1h-3v-1h-1v-3h1zM508 248h3v1h1v3h-1v1h-3v-1h-1v-3h1zM509 246h3v1h1v3h-1v1h-3v-1h-1v-3h1zM510 245h3v1h1v3h-1v1h-3v-1h-1v-3h1zM512 245h3v1h1v3h-1v1h-3v-1h-1v-3h1zM513 245h3v1h1v3h-1v1h-3v-1h-1v-3h1zM515 245h3v1h1v3h-1v1h-3v-1h-1v-3h1zM515 243h3v1h1v3h-1v1h-3v-1h-1v-3h1zM516 241h3v1h1v3h-1v1h-3v-1h-1v-3h1zM516 240h3v1h1v3h-1v1h-3v-1h-1v-3h1zM517 238h3v1h1v3h-1v1h-3v-1h-1v-3h1zM518 238h3v1h1v3h-1v1h-3v-1h-1v-3h1zM525 237h3v1h1v3h-1v1h-3v-1h-1v-3h1zM539 235h3v1h1v3h-1v1h-3v-1h-1v-3h1zM541 234h3v1h1v3h-1v1h-3v-1h-1v-3h1zM542 234h3v1h1v3h-1v1h-3v-1h-1v-3h1zM543 234h3v1h1v3h-1v1h-3v-1h-1v-3h1zM545 233h3v1h1v3h-1v1h-3v-1h-1v-3h1zM545 232h3v1h1v3h-1v1h-3v-1h-1v-3h1zM546 230h3v1h1v3h-1v1h-3v-1h-1v-3h1zM547 229h3v1h1v3h-1v1h-3v-1h-1v-3h1zM549 228h3v1h1v3h-1v1h-3v-1h-1v-3h1zM551 227h3v1h1v3h-1v1h-3v-1h-1v-3h1zM552 227h3v1h1v3h-1v1h-3v-1h-1v-3h1zM553 226h3v1h1v3h-1v1h-3v-1h-1v-3h1zM553 224h3v1h1v3h-1v1h-3v-1h-1v-3h1zM555 222h3v1h1v3h-1v1h-3v-1h-1v-3h1zM556 222h3v1h1v3h-1v1h-3v-1h-1v-3h1zM557 221h3v1h1v3h-1v1h-3v-1h-1v-3h1zM558 219h3v1h1v3h-1v1h-3v-1h-1v-3h1zM559 218h3v1h1v3h-1v1h-3v-1h-1v-3h1zM560 217h3v1h1v3h-1v1h-3v-1h-1v-3h1zM561 217h3v1h1v3h-1v1h-3v-1h-1v-3h1zM563 216h3v1h1v3h-1v1h-3v-1h-1v-3h1zM563 214h3v1h1v3h-1v1h-3v-1h-1v-3h1zM563 212h3v1h1v3h-1v1h-3v-1h-1v-3h1zM564 210h3v1h1v3h-1v1h-3v-1h-1v-3h1zM565 209h3v1h1v3h-1v1h-3v-1h-1v-3h1zM566 208h3v1h1v3h-1v1h-3v-1h-1v-3h1zM566 207h3v1h1v3h-1v1h-3v-1h-1v-3h1zM568 206h3v1h1v3h-1v1h-3v-1h-1v-3h1z" fill="#00ff00" shape-rendering="crispEdges"/>
<rect x="640.5" y="362.5" width="106" height="59" fill="#fff" stroke="#000" stroke-width="1" shape-rendering="crispEdges"/>
<g fill="#000"><text x="691.2" y="377" font-size="12px" letter-spacing=".25" text-anchor="middle">Legend</text><text x="705.6" y="399" font-size="13px" letter-spacing="-.15">Trades</text><text x="705.4" y="414.6" font-size="13px">Peaks</text></g>
<line x1="642" y1="393.5" x2="690" y2="393.5" stroke="#000" shape-rendering="crispEdges"/>
<path d="M666 408h3v1h1v3h-1v1h-3v-1h-1v-3h1z" fill="#00ff00" shape-rendering="crispEdges"/>
</svg>
<div id="tabstrip"></div><div class="abs" style="left:13px;top:679px;width:746px;height:1px;background:#7c8594"></div><div class="abs" style="left:359px;top:42px;width:1px;height:1px;background:#999"></div><div class="abs" style="left:365px;top:42px;width:1px;height:1px;background:#999"></div>
<div class="tab tf first" style="left:15px;width:144px"><span style="left:5px">Performance Summary</span></div>
<div class="tab tf" style="left:159px;width:96px"><span style="left:6px;letter-spacing:.2px">Trade Analysis</span></div>
<div class="tab tf" style="left:255px;width:75px"><span style="left:6px;letter-spacing:.25px">Trades List</span></div>
<div class="tab tf" style="left:330px;width:113px"><span style="left:5.5px;letter-spacing:.08px">Periodical Returns</span></div>
<div class="tab tf sel" style="left:443px;width:133px"><span style="left:7.5px;top:4px">Performance Graphs</span></div>
<div class="tab tf" style="left:576px;width:88px"><span style="left:4.5px;letter-spacing:.22px">Trade Graphs</span></div>
<div class="tab tf" style="left:664px;width:56px"><span style="left:6px">Settings</span></div>
</body></html>
